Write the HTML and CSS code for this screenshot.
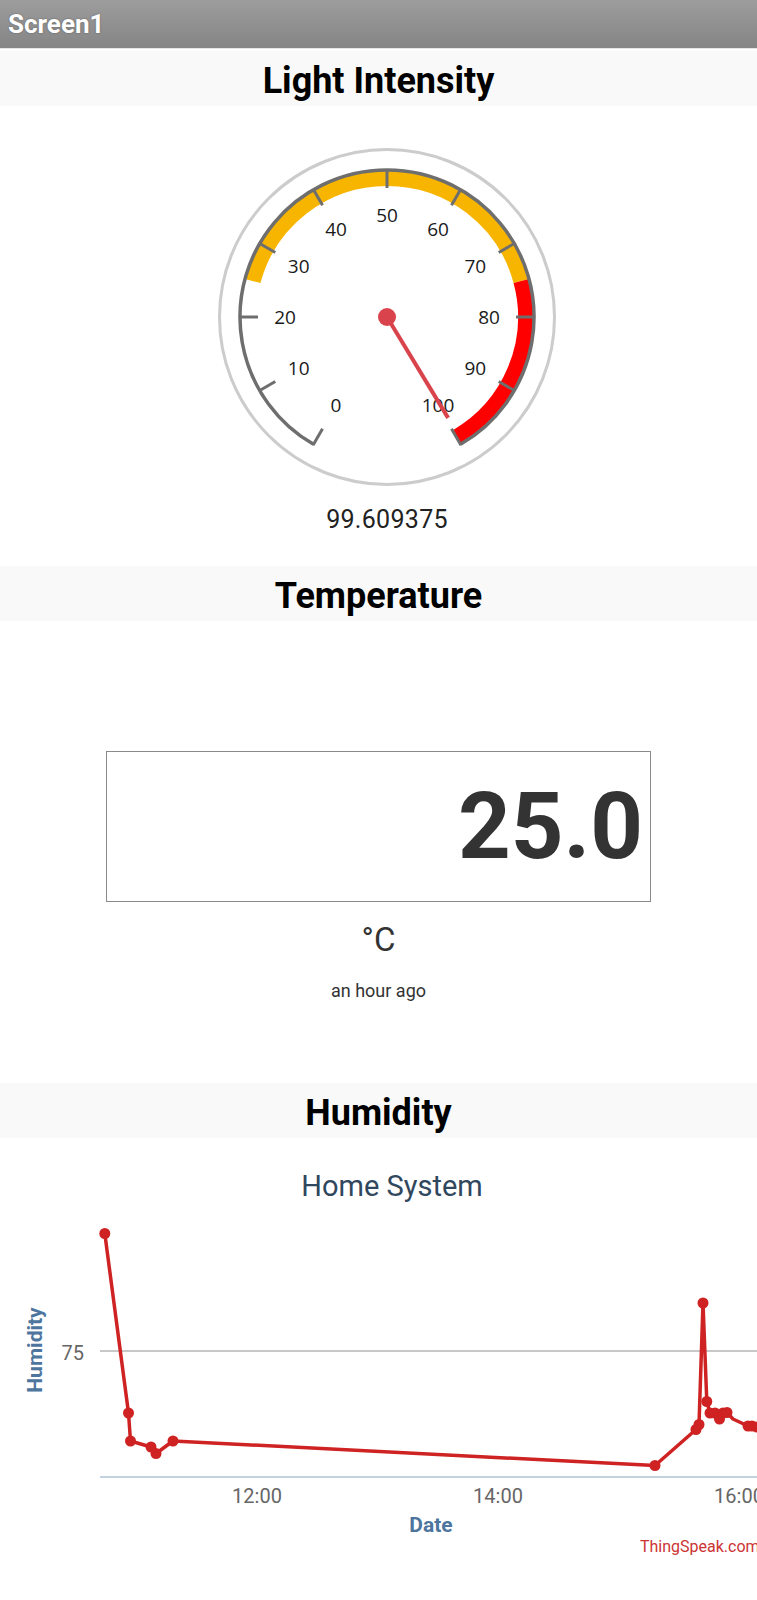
FILE: index.html
```html
<!DOCTYPE html>
<html>
<head>
<meta charset="utf-8">
<title>Screen1</title>
<link rel="stylesheet" href="styles.css">
</head>
<body>
<div class="titlebar">Screen1</div>

<h2 class="band">Light Intensity</h2>
<div class="gauge-wrap">
  <svg class="gauge" width="340" height="340" viewBox="0 0 340 340">
    <circle cx="170" cy="170" r="167.5" fill="#fff" stroke="#cccccc" stroke-width="3"/>
    <path d="M 36.2 134.15 A 138.5 138.5 0 0 1 303.8 134.15" fill="none" stroke="#f7b500" stroke-width="15"/>
    <path d="M 303.8 134.15 A 138.5 138.5 0 0 1 239.25 289.9" fill="none" stroke="#ff0000" stroke-width="15"/>
    <path d="M 96.5 297.3 A 147 147 0 1 1 243.5 297.3" fill="none" stroke="#6e6e6e" stroke-width="3.5"/>
    <g stroke="#6e6e6e" stroke-width="3">
      <line x1="170" y1="22" x2="170" y2="41" transform="rotate(-150 170 170)"/>
      <line x1="170" y1="22" x2="170" y2="41" transform="rotate(-120 170 170)"/>
      <line x1="170" y1="22" x2="170" y2="41" transform="rotate(-90 170 170)"/>
      <line x1="170" y1="22" x2="170" y2="41" transform="rotate(-60 170 170)"/>
      <line x1="170" y1="22" x2="170" y2="41" transform="rotate(-30 170 170)"/>
      <line x1="170" y1="22" x2="170" y2="41"/>
      <line x1="170" y1="22" x2="170" y2="41" transform="rotate(30 170 170)"/>
      <line x1="170" y1="22" x2="170" y2="41" transform="rotate(60 170 170)"/>
      <line x1="170" y1="22" x2="170" y2="41" transform="rotate(90 170 170)"/>
      <line x1="170" y1="22" x2="170" y2="41" transform="rotate(120 170 170)"/>
      <line x1="170" y1="22" x2="170" y2="41" transform="rotate(150 170 170)"/>
    </g>
    <g class="glabels" text-anchor="middle">
      <text x="119" y="258.3" dy="0.36em">0</text>
      <text x="81.7" y="221" dy="0.36em">10</text>
      <text x="68" y="170" dy="0.36em">20</text>
      <text x="81.7" y="119" dy="0.36em">30</text>
      <text x="119" y="81.7" dy="0.36em">40</text>
      <text x="170" y="68" dy="0.36em">50</text>
      <text x="221" y="81.7" dy="0.36em">60</text>
      <text x="258.3" y="119" dy="0.36em">70</text>
      <text x="272" y="170" dy="0.36em">80</text>
      <text x="258.3" y="221" dy="0.36em">90</text>
      <text x="221" y="258.3" dy="0.36em">100</text>
    </g>
    <line x1="170" y1="170" x2="231.1" y2="270.9" stroke="#d9434c" stroke-width="4"/>
    <circle cx="170" cy="170" r="9" fill="#d9434c"/>
  </svg>
</div>
<div class="gauge-value">99.609375</div>

<h2 class="band band-temp">Temperature</h2>
<div class="temp-box"><span class="temp-num">25.0</span></div>
<div class="temp-unit">°C</div>
<div class="temp-time">an hour ago</div>

<h2 class="band band-hum">Humidity</h2>
<svg class="chart" width="757" height="462" viewBox="0 0 757 462">
  <text class="ctitle" x="392" y="58" text-anchor="middle">Home System</text>
  <line x1="100" y1="213" x2="757" y2="213" stroke="#c8c8c8" stroke-width="2"/>
  <line x1="100" y1="339" x2="757" y2="339" stroke="#c3d1e0" stroke-width="2"/>
  <text class="tick" x="84" y="222" text-anchor="end">75</text>
  <text class="atitle" transform="translate(42 212) rotate(-90)" text-anchor="middle">Humidity</text>
  <text class="tick" x="257" y="365" text-anchor="middle">12:00</text>
  <text class="tick" x="498" y="365" text-anchor="middle">14:00</text>
  <text class="tick" x="739" y="365" text-anchor="middle">16:00</text>
  <text class="atitle" x="431" y="394" text-anchor="middle">Date</text>
  <text class="credit" x="640" y="414">ThingSpeak.com</text>
  <polyline fill="none" stroke="#cf2222" stroke-width="3.5" stroke-linejoin="round"
    points="104.8,95.5 128.5,275 130.5,303 151,309 156,315.5 173,303 655,327.5 696,291.5 699,286.5 703,165 706.8,263.5 710,275 715,275 719.5,281 723,275 727,274.5 733,281 748,288 752,288 757,289 765,290"/>
  <g fill="#cf2222">
    <circle cx="104.8" cy="95.5" r="5.5"/>
    <circle cx="128.5" cy="275" r="5.5"/>
    <circle cx="130.5" cy="303" r="5.5"/>
    <circle cx="151" cy="309" r="5.5"/>
    <circle cx="156" cy="315.5" r="5.5"/>
    <circle cx="173" cy="303" r="5.5"/>
    <circle cx="655" cy="327.5" r="5.5"/>
    <circle cx="696" cy="291.5" r="5.5"/>
    <circle cx="699" cy="286.5" r="5.5"/>
    <circle cx="703" cy="165" r="5.5"/>
    <circle cx="706.8" cy="263.5" r="5.5"/>
    <circle cx="710" cy="275" r="5.5"/>
    <circle cx="715" cy="275" r="5.5"/>
    <circle cx="719.5" cy="281" r="5.5"/>
    <circle cx="723" cy="275" r="5.5"/>
    <circle cx="727" cy="274.5" r="5.5"/>
    <circle cx="748" cy="288" r="5.5"/>
    <circle cx="752" cy="288" r="5.5"/>
    <circle cx="757" cy="289" r="5.5"/>
  </g>
</svg>
</body>
</html>
```

FILE: styles.css
```css
html, body {
  margin: 0;
  padding: 0;
  background: #ffffff;
}
body {
  width: 757px;
  height: 1600px;
  overflow: hidden;
  font-family: Roboto, "Liberation Sans", sans-serif;
  color: #222;
}
.titlebar {
  height: 48px;
  line-height: 48px;
  padding-left: 8px;
  background: linear-gradient(#9d9d9d, #858585);
  color: #fff;
  font-size: 26px;
  font-weight: bold;
  text-shadow: 0 0 2px rgba(0,0,0,0.35);
  border-bottom: 1px solid #e6e6e6;
  margin-bottom: 2px;
}
.band {
  margin: 0;
  height: 50px;
  padding-top: 5px;
  line-height: 50px;
  background: #f9f9f9;
  text-align: center;
  font-size: 36px;
  font-weight: bold;
  color: #000;
}
.gauge-wrap {
  display: flex;
  justify-content: center;
  padding-left: 17px;
  margin-top: 41px;
}
.gauge {
  display: block;
}
.glabels text {
  font-family: "Open Sans", "Noto Sans", sans-serif;
  font-size: 19px;
  fill: #1a1a1a;
}
.gauge-value {
  margin-top: 18px;
  padding-left: 17px;
  height: 30px;
  line-height: 30px;
  text-align: center;
  font-size: 25px;
  letter-spacing: 0.3px;
  color: #222;
}
.band-temp {
  margin-top: 31px;
}
.temp-box {
  margin: 130px auto 0;
  width: 543px;
  height: 149px;
  border: 1px solid #8a8a8a;
  display: flex;
  align-items: center;
  justify-content: flex-end;
}
.temp-num {
  font-size: 92px;
  font-weight: bold;
  color: #333;
  padding-right: 7px;
  line-height: 1;
}
.temp-unit {
  margin-top: 18px;
  height: 40px;
  line-height: 40px;
  text-align: center;
  font-size: 33px;
  color: #333;
}
.temp-time {
  margin-top: 19px;
  height: 24px;
  line-height: 24px;
  text-align: center;
  font-size: 18px;
  color: #333;
}
.band-hum {
  margin-top: 80px;
}
.chart {
  display: block;
}
.ctitle {
  font-size: 29px;
  fill: #30475e;
}
.tick {
  font-size: 20px;
  fill: #666;
}
.atitle {
  font-size: 21px;
  font-weight: bold;
  fill: #4d759e;
}
.credit {
  font-size: 16px;
  fill: #cc3333;
}
```
